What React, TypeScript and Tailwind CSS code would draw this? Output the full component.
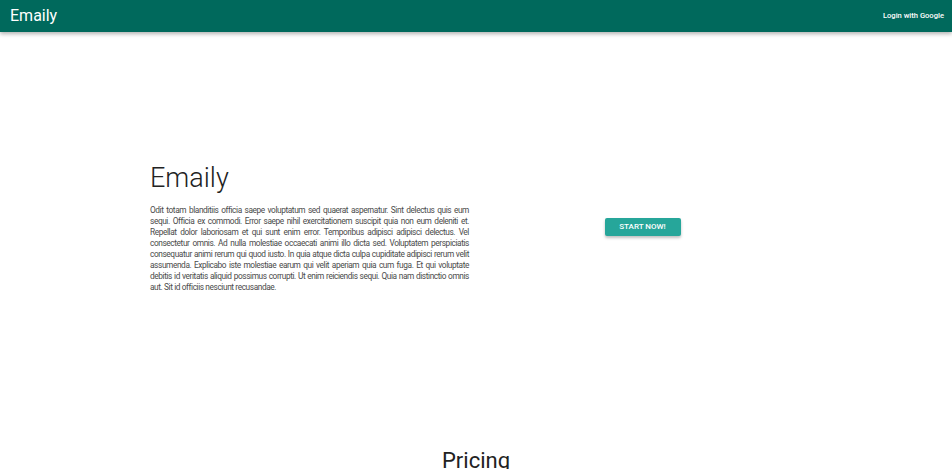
import React from 'react';

// line breaks follow the reference so the justified block wraps the same way
const lines = [
  'Odit totam blanditiis officia saepe voluptatum sed quaerat aspernatur. Sint delectus quis eum',
  'sequi. Officia ex commodi. Error saepe nihil exercitationem suscipit quia non eum deleniti et.',
  'Repellat dolor laboriosam et qui sunt enim error. Temporibus adipisci adipisci delectus. Vel',
  'consectetur omnis. Ad nulla molestiae occaecati animi illo dicta sed. Voluptatem perspiciatis',
  'consequatur animi rerum qui quod iusto. In quia atque dicta culpa cupiditate adipisci rerum velit',
  'assumenda. Explicabo iste molestiae earum qui velit aperiam quia cum fuga. Et qui voluptate',
  'debitis id veritatis aliquid possimus corrupti. Ut enim reiciendis sequi. Quia nam distinctio omnis',
  'aut. Sit id officiis nesciunt recusandae.',
];

const Header = () => {
  return (
    <nav className="relative z-10 flex h-8 items-center justify-between bg-[#00695c] pl-[10px] pr-[8px] text-white shadow-[0_2px_4px_rgba(0,0,0,0.3)]">
      <span className="text-[16px] leading-none">Emaily</span>
      <span className="text-[7.6px] font-medium">Login with Google</span>
    </nav>
  );
};

const Landing = () => {
  return (
    <section className="flex h-[392px] items-center">
      <div className="mx-auto grid w-[666px] grid-cols-2 items-center">
        <div className="px-[7px]">
          <h1 className="text-[27px] font-light leading-[30px] text-[#222]">Emaily</h1>
          <p className="mt-[12px] text-[8.3px] leading-[11px] tracking-[-0.4px] text-[#4a4a4a]">
            {lines.map((line, index) => (
              <span
                key={index}
                className={
                  index < lines.length - 1
                    ? 'block text-justify [text-align-last:justify]'
                    : 'block'
                }
              >
                {line}
              </span>
            ))}
          </p>
        </div>
        <div className="flex items-center justify-center pb-[2px]">
          <button className="h-[18px] w-[76px] rounded-[2px] bg-[#26a69a] text-[8px] font-medium text-white shadow-[0_2px_3px_rgba(0,0,0,0.25)]">
            START NOW!
          </button>
        </div>
      </div>
    </section>
  );
};

const App = () => {
  return (
    <div className="min-h-screen bg-white font-['Roboto',sans-serif]">
      <Header />
      <Landing />
      <h2 className="pt-[26px] text-center text-[22px] font-normal leading-none text-[#222]">Pricing</h2>
    </div>
  );
};

export default App;
